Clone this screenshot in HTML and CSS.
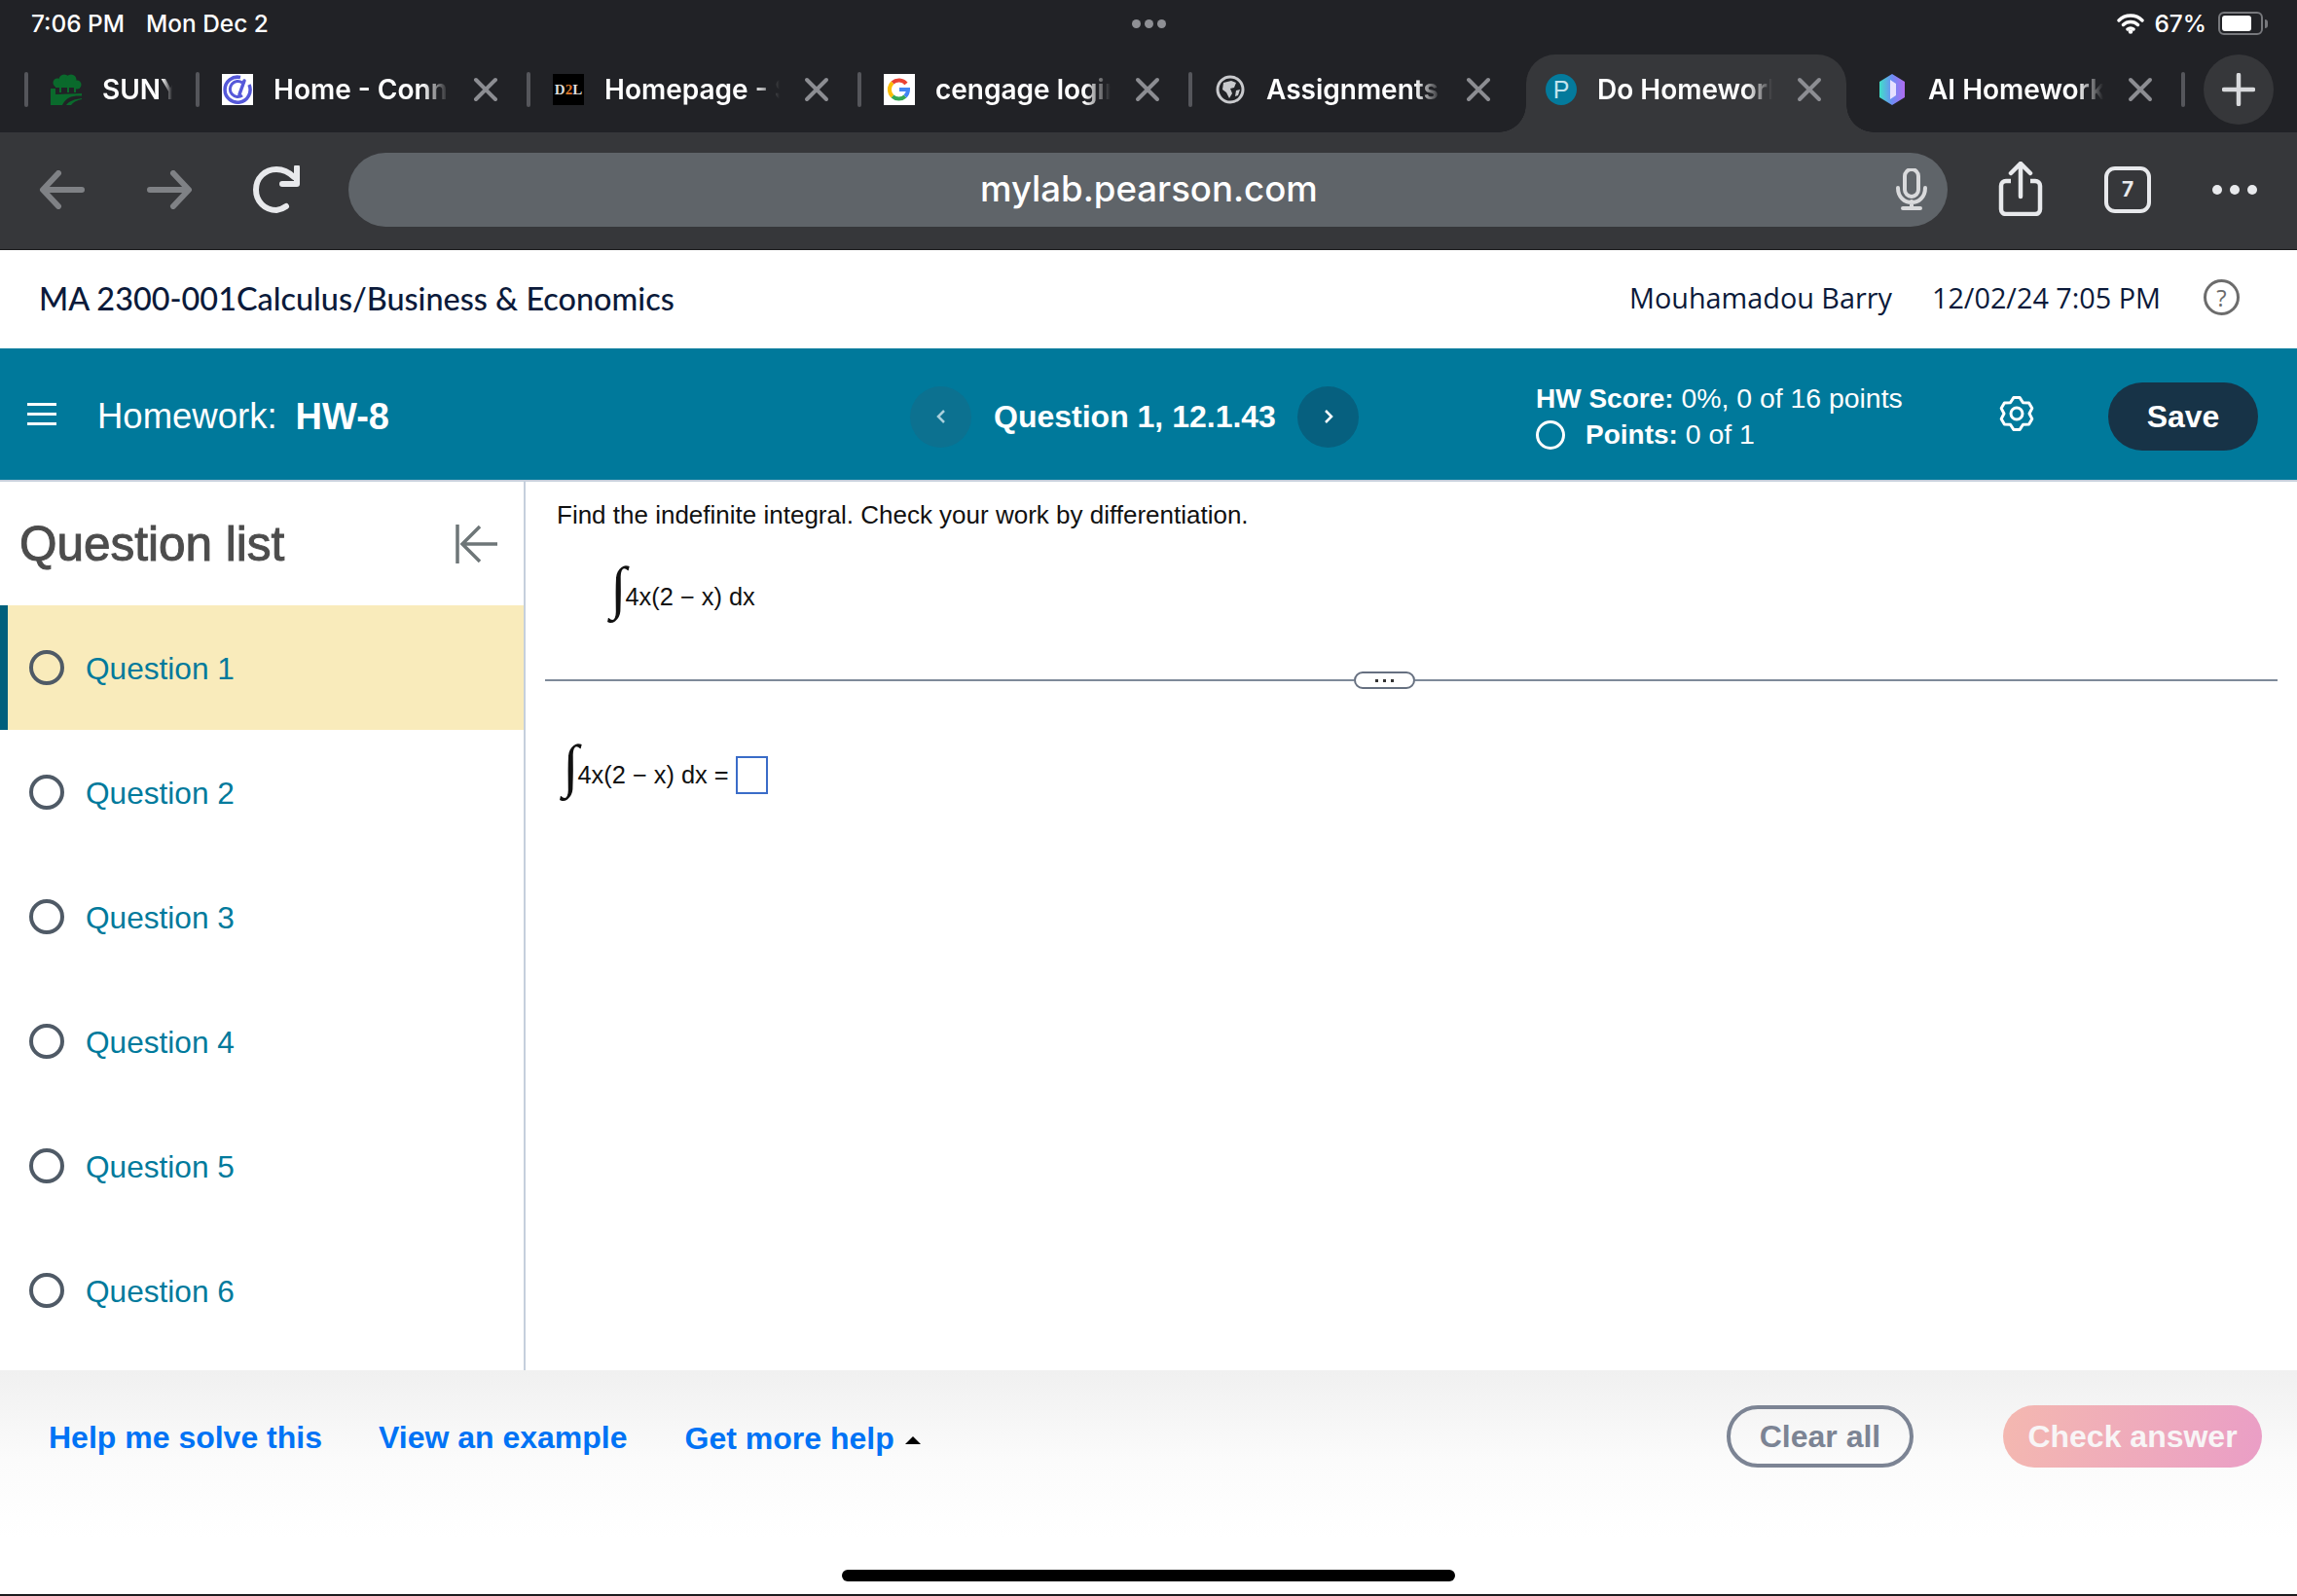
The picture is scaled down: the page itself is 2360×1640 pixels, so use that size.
FILE: index.html

```html
<!DOCTYPE html>
<html>
<head>
  <title>Do Homework</title>
  <meta charset="utf-8">
  <link rel="stylesheet" href="styles.css">
</head>
<body>

<div class="status">
  <div class="status-left"><span>7:06 PM</span><span>Mon Dec 2</span></div>
  <div class="status-dots"><i></i><i></i><i></i></div>
  <div class="status-right">
    <svg class="wifi" width="28" height="22" viewBox="0 0 28 22"><path d="M2 8a17 17 0 0 1 24 0M6.500 12.500a11 11 0 0 1 15 0M11 17a4.500 4.500 0 0 1 6 0" fill="none" stroke="#fff" stroke-width="3.400" stroke-linecap="round"/><circle cx="14" cy="19.500" r="2.300" fill="#fff"/></svg>
    <span>67%</span>
    <div class="battery"><div class="battery-fill"></div></div>
    <div class="battery-tip"></div>
  </div>
</div>

<div class="tabs">
  <div class="tab tab-short">
    <i class="sep"></i>
    <svg class="fav" viewBox="0 0 32 32"><circle cx="7" cy="9" r="4.500" fill="#0a6a2c"/><circle cx="14" cy="6" r="5.500" fill="#0a6a2c"/><circle cx="21" cy="6" r="5.500" fill="#0a6a2c"/><circle cx="27" cy="11" r="4.500" fill="#0a6a2c"/><rect x="5" y="8" width="24" height="6" fill="#0a6a2c"/><path d="M9 12h2v7H9zM17 10h2v9h-2zM24 12h2v7h-2z" fill="#0a6a2c"/><path d="M0 15h5v6l27-1v2.500C22 22 16 24 12 32H0z" fill="#0a6a2c"/><path d="M16 32c3-4 8-6 16-7v1c-5 1-9 3-11 6z" fill="#0a6a2c"/></svg>
    <span class="tab-title">SUNY</span>
  </div>
  <div class="tab">
    <i class="sep"></i>
    <svg class="fav" viewBox="0 0 32 32"><rect width="32" height="32" fill="#fff"/><path d="M19 3.500A13 13 0 1 0 28 11" fill="none" stroke="#5558d9" stroke-width="3.500"/><path d="M21 9a8 8 0 1 0 0 13" fill="none" stroke="#5558d9" stroke-width="3"/><path d="M23 7l-5 14" fill="none" stroke="#5558d9" stroke-width="3.500" stroke-linecap="round"/></svg>
    <span class="tab-title">Home - Connect</span>
    <svg class="x" viewBox="0 0 26 26"><path d="M3 3l20 20M23 3L3 23"/></svg>
  </div>
  <div class="tab">
    <i class="sep"></i>
    <div class="fav fav-d2l">D<b>2</b>L</div>
    <span class="tab-title">Homepage - SUNY</span>
    <svg class="x" viewBox="0 0 26 26"><path d="M3 3l20 20M23 3L3 23"/></svg>
  </div>
  <div class="tab">
    <i class="sep"></i>
    <svg class="fav" viewBox="0 0 32 32"><rect width="32" height="32" fill="#fff"/><path d="M23 10a9.500 9.500 0 0 0-14-1" fill="none" stroke="#ea4335" stroke-width="4"/><path d="M9 9a9.500 9.500 0 0 0 0 14" fill="none" stroke="#fbbc05" stroke-width="4"/><path d="M9 23a9.500 9.500 0 0 0 13 0" fill="none" stroke="#34a853" stroke-width="4"/><path d="M22 23c2-2 3-4 3-7H16" fill="none" stroke="#4285f4" stroke-width="4"/></svg>
    <span class="tab-title">cengage login</span>
    <svg class="x" viewBox="0 0 26 26"><path d="M3 3l20 20M23 3L3 23"/></svg>
  </div>
  <div class="tab">
    <i class="sep"></i>
    <svg class="fav" viewBox="0 0 32 32"><circle cx="16" cy="16" r="13" fill="none" stroke="#c9cacd" stroke-width="3"/><path d="M9 9l8-2 5 2-2 5-4 1 2 5-3 5-3-6-4-3zM22 17l4-1-2 6-3 1z" fill="#c9cacd"/></svg>
    <span class="tab-title">Assignments</span>
    <svg class="x" viewBox="0 0 26 26"><path d="M3 3l20 20M23 3L3 23"/></svg>
  </div>
  <div class="tab tab-active">
    <div class="fav fav-p">P</div>
    <span class="tab-title">Do Homework</span>
    <svg class="x" viewBox="0 0 26 26"><path d="M3 3l20 20M23 3L3 23"/></svg>
  </div>
  <div class="tab tab-last">
    <svg class="fav fav-ai" viewBox="0 0 28 32"><defs><linearGradient id="hex" x1="0" x2="1" y1="0" y2="0"><stop offset="0" stop-color="#3fe0c8"/><stop offset="0.5" stop-color="#6d8cf5"/><stop offset="1" stop-color="#b06cf0"/></linearGradient></defs><path d="M14 0l13 8v16l-13 8-13-8V8z" fill="url(#hex)"/><path d="M12 6l6 4v12l-6 4z" fill="#e6e0ff"/></svg>
    <span class="tab-title">AI Homework</span>
    <svg class="x" viewBox="0 0 26 26"><path d="M3 3l20 20M23 3L3 23"/></svg>
    <i class="sep sep-end"></i>
  </div>
  <div class="new-tab">
    <svg width="34" height="34" viewBox="0 0 34 34"><path d="M17 2v30M2 17h30" stroke="#d8d9dc" stroke-width="4.500" stroke-linecap="round"/></svg>
  </div>
</div>

<div class="toolbar">
  <svg class="tool-arrow" width="48" height="40" viewBox="0 0 48 40"><path d="M44 20H5M20 3L4 20l16 17" fill="none" stroke="#7f8185" stroke-width="6" stroke-linecap="round" stroke-linejoin="round"/></svg>
  <svg class="tool-arrow tool-forward" width="48" height="40" viewBox="0 0 48 40"><path d="M4 20h39M28 3l16 17-16 17" fill="none" stroke="#7f8185" stroke-width="6" stroke-linecap="round" stroke-linejoin="round"/></svg>
  <svg class="tool-reload" width="50" height="50" viewBox="0 0 50 50"><path d="M35 42a22 22 0 0 1-10 4C13 46 4 37 4 25S13 4 25 4c7 0 13 3 18 8" fill="none" stroke="#e8e9ec" stroke-width="6" stroke-linecap="round"/><path d="M46 2v17H31" fill="none" stroke="#e8e9ec" stroke-width="6" stroke-linejoin="round" stroke-linecap="round"/></svg>
  <div class="url">
    <span class="url-text">mylab.pearson.com</span>
    <svg class="mic" width="32" height="44" viewBox="0 0 32 44"><rect x="9" y="1" width="14" height="28" rx="7" fill="none" stroke="#d9dadc" stroke-width="4"/><path d="M2 20c0 20 28 20 28 0M16 34v6M7 41h18" fill="none" stroke="#d9dadc" stroke-width="4" stroke-linecap="round"/></svg>
  </div>
  <svg class="tool-share" width="46" height="56" viewBox="0 0 46 56"><path d="M13 20H8a5 5 0 0 0-5 5v24a5 5 0 0 0 5 5h30a5 5 0 0 0 5-5V25a5 5 0 0 0-5-5h-5" fill="none" stroke="#e8e9ec" stroke-width="4.500"/><path d="M23 36V3M13 12l10-10 10 10" fill="none" stroke="#e8e9ec" stroke-width="4.500" stroke-linecap="round"/></svg>
  <div class="tab-count">7</div>
  <div class="tool-more"><i></i><i></i><i></i></div>
</div>

<div class="course">
  <div class="course-name">MA 2300-001Calculus/Business &amp; Economics</div>
  <div class="course-user">Mouhamadou Barry</div>
  <div class="course-date">12/02/24 7:05 PM</div>
  <div class="help">?</div>
</div>

<div class="hw-bar">
  <div class="hw-title">
    <div class="burger"><i></i><i></i><i></i></div>
    <span class="hw-label">Homework:</span>
    <b class="hw-name">HW-8</b>
  </div>
  <div class="q-nav">
    <div class="q-btn q-prev">
      <svg width="12" height="18" viewBox="0 0 12 18"><path d="M9 3L3 9l6 6" fill="none" stroke="#a9d0dc" stroke-width="2.500"/></svg>
    </div>
    <span class="q-name">Question 1, 12.1.43</span>
    <div class="q-btn q-next">
      <svg width="12" height="18" viewBox="0 0 12 18"><path d="M3 3l6 6-6 6" fill="none" stroke="#fff" stroke-width="2.500"/></svg>
    </div>
  </div>
  <div class="hw-score">
    <div><b>HW Score:</b> 0%, 0 of 16 points</div>
    <div class="hw-points"><i class="points-ring"></i><span><b>Points:</b> 0 of 1</span></div>
  </div>
  <svg class="gear" width="36" height="36" viewBox="0 0 36 36"><path d="M14.800 1.600H21.200L24.500 6.700L30.600 7L33.800 12.600L31 18L33.800 23.400L30.600 29L24.500 29.300L21.200 34.400H14.800L11.500 29.300L5.400 29L2.200 23.400L5 18L2.200 12.600L5.400 7L11.500 6.700Z" fill="none" stroke="#fff" stroke-width="3" stroke-linejoin="round"/><circle cx="18" cy="18" r="6" fill="none" stroke="#fff" stroke-width="3"/></svg>
  <div class="save">Save</div>
</div>

<div class="main">
  <div class="side">
    <div class="side-head">
      <span class="side-title">Question list</span>
      <svg width="46" height="42" viewBox="0 0 46 42"><path d="M3 1v40M44 21H10M26 3L8 21l18 18" fill="none" stroke="#6e7678" stroke-width="3.500"/></svg>
    </div>
    <div class="q-item q-item-on"><i class="ring"></i><span class="q-label">Question 1</span></div>
    <div class="q-item"><i class="ring"></i><span class="q-label">Question 2</span></div>
    <div class="q-item"><i class="ring"></i><span class="q-label">Question 3</span></div>
    <div class="q-item"><i class="ring"></i><span class="q-label">Question 4</span></div>
    <div class="q-item"><i class="ring"></i><span class="q-label">Question 5</span></div>
    <div class="q-item"><i class="ring"></i><span class="q-label">Question 6</span></div>
  </div>
  <div class="work">
    <p class="prompt">Find the indefinite integral. Check your work by differentiation.</p>
    <div class="math math-top"><span class="int">∫</span>4x(2 − x) dx</div>
    <div class="split">
      <div class="split-line split-left"></div>
      <div class="split-handle"><i></i><i></i><i></i></div>
      <div class="split-line"></div>
    </div>
    <div class="math math-answer"><span class="int">∫</span>4x(2 − x) dx =<div class="answer-box"></div></div>
  </div>
</div>

<div class="foot">
  <div class="foot-row">
    <span class="foot-link">Help me solve this</span>
    <span class="foot-link foot-view">View an example</span>
    <span class="foot-link foot-more">Get more help</span>
    <i class="caret"></i>
    <div class="btn-clear">Clear all</div>
    <div class="btn-check">Check answer</div>
  </div>
  <div class="home-bar"></div>
</div>

</body>
</html>
```

FILE: styles.css

```css
html, body {
    margin: 0;
    padding: 0;
}

body {
    width: 2360px;
    height: 1640px;
    overflow: hidden;
    background: #fff;
    font-family: "Liberation Sans", Arial, sans-serif;
    display: flex;
    flex-direction: column;
}

/* ipad status bar */
.status {
    height: 56px;
    background: #212226;
    color: #fff;
    font-family: Inter, sans-serif;
    font-size: 24.400px;
    font-weight: 500;
    display: flex;
    align-items: center;
    padding: 0 30px 8px 32px;
    box-sizing: border-box;
}

.status-left {
    width: 1131px;
    display: flex;
    gap: 22px;
}

.status-dots {
    display: flex;
    gap: 4px;
}

.status-dots i {
    width: 9px;
    height: 9px;
    border-radius: 50%;
    background: #8f9095;
}

.status-right {
    margin-left: auto;
    display: flex;
    align-items: center;
}

.wifi {
    margin-right: 10px;
}

.battery {
    width: 46px;
    height: 24px;
    border: 2px solid #77787c;
    border-radius: 6px;
    margin-left: 12px;
    padding: 2px;
    display: flex;
    box-sizing: border-box;
}

.battery-fill {
    width: 30px;
    background: #fff;
    border-radius: 3px;
}

.battery-tip {
    width: 3px;
    height: 9px;
    margin-left: 2px;
    background: #77787c;
    border-radius: 0 3px 3px 0;
}

/* safari tabs */
.tabs {
    height: 80px;
    background: #212226;
    display: flex;
    padding-left: 25px;
    color: #fff;
    font-family: Inter, sans-serif;
    font-size: 28px;
    font-weight: 600;
}

.tab {
    width: 340px;
    height: 72px;
    display: flex;
    align-items: center;
    flex: none;
}

.tab-short {
    width: 176px;
}

.sep {
    width: 4px;
    height: 36px;
    background: #55565b;
    border-radius: 2px;
    margin-right: 23px;
    flex: none;
}

.sep-end {
    margin: 0 0 0 29px;
}

.fav {
    width: 32px;
    height: 32px;
    margin-right: 21px;
    flex: none;
}

.fav-d2l {
    background: #000;
    color: #ddd;
    font-family: "Liberation Serif", serif;
    font-size: 15px;
    font-weight: 700;
    line-height: 32px;
    text-align: center;
    white-space: nowrap;
}

.fav-d2l b {
    color: #e07a2a;
}

.fav-p {
    background: #047a9c;
    border-radius: 50%;
    color: #c4e4ee;
    font-family: "Liberation Sans", sans-serif;
    font-size: 25px;
    font-weight: 400;
    line-height: 32px;
    text-align: center;
}

.fav-ai {
    width: 28px;
    margin-right: 23px;
}

.tab-title {
    width: 180px;
    flex: none;
    overflow: hidden;
    white-space: nowrap;
    -webkit-mask-image: linear-gradient(to right, #000 85%, transparent 100%);
    mask-image: linear-gradient(to right, #000 85%, transparent 100%);
}

.tab-short .tab-title {
    width: 72px;
}

.x {
    width: 26px;
    height: 26px;
    margin-left: 25px;
    flex: none;
}

.x path {
    stroke: #8c8d92;
    stroke-width: 4;
    stroke-linecap: round;
    fill: none;
}

.tab-active {
    position: relative;
    width: 329px;
    height: 80px;
    margin-left: 7px;
    padding: 0 0 8px 20px;
    box-sizing: border-box;
    background: #36373a;
    border-radius: 30px 30px 0 0;
}

.tab-active::before,
.tab-active::after {
    content: "";
    position: absolute;
    bottom: 0;
    width: 28px;
    height: 28px;
}

.tab-active::before {
    left: -28px;
    background: radial-gradient(circle at 0 0, transparent 27.500px, #36373a 28px);
}

.tab-active::after {
    right: -28px;
    background: radial-gradient(circle at 100% 0, transparent 27.500px, #36373a 28px);
}

.tab-last {
    width: 367px;
    padding-left: 33px;
    box-sizing: border-box;
}

.new-tab {
    width: 72px;
    height: 72px;
    border-radius: 50%;
    background: #36373a;
    display: flex;
    align-items: center;
    justify-content: center;
}

/* address bar row */
.toolbar {
    height: 121px;
    background: #36373a;
    border-bottom: 1px solid #1c1c1e;
    box-sizing: border-box;
    display: flex;
    align-items: center;
    padding: 0 0 3px 40px;
}

.tool-forward {
    margin-left: 62px;
}

.tool-reload {
    margin-left: 61px;
}

.url {
    width: 1643px;
    height: 76px;
    margin-left: 49px;
    border-radius: 38px;
    background: #5f6469;
    display: flex;
    align-items: center;
    padding-left: 649px;
    box-sizing: border-box;
}

.url-text {
    color: #fff;
    font-family: Inter, sans-serif;
    font-size: 36.600px;
    font-weight: 500;
    margin-bottom: 2px;
}

.mic {
    margin-left: auto;
    margin-right: 21px;
}

.tool-share {
    margin-left: 52px;
    margin-top: -2px;
}

.tab-count {
    width: 48px;
    height: 48px;
    margin-left: 63px;
    border: 4px solid #e8e9ec;
    border-radius: 11px;
    box-sizing: border-box;
    color: #e8e9ec;
    font-family: Inter, sans-serif;
    font-size: 21px;
    font-weight: 700;
    line-height: 40px;
    text-align: center;
}

.tool-more {
    display: flex;
    gap: 8px;
    margin-left: 63px;
}

.tool-more i {
    width: 10px;
    height: 10px;
    border-radius: 50%;
    background: #e8e9ec;
}

/* course header */
.course {
    height: 101px;
    display: flex;
    align-items: center;
    padding: 0 59px 4px 40px;
    box-sizing: border-box;
    font-family: "Open Sans", sans-serif;
    font-size: 28.800px;
    color: #0b1a3a;
}

.course-name {
    font-family: Lato, sans-serif;
    font-size: 32.400px;
    font-weight: 500;
    margin-top: 2px;
}

.course-user {
    margin-left: auto;
}

.course-date {
    margin-left: 41px;
}

.help {
    width: 37px;
    height: 37px;
    margin-left: 44px;
    border: 3px solid #6c6c6c;
    border-radius: 50%;
    box-sizing: border-box;
    font-size: 24px;
    line-height: 31px;
    text-align: center;
    color: #6c6c6c;
}

/* homework bar */
.hw-bar {
    height: 137px;
    background: #00799b;
    border-bottom: 2px solid #c5cfdc;
    box-sizing: border-box;
    color: #fff;
    display: flex;
    align-items: center;
    padding: 5px 0 0 28px;
}

.hw-title {
    width: 907px;
    flex: none;
    display: flex;
    align-items: center;
    font-size: 36.500px;
}

.burger {
    width: 30px;
    margin: -6px 42px 0 0;
}

.burger i {
    display: block;
    height: 3px;
    background: #fff;
    margin: 7px 0;
}

.hw-name {
    margin-left: 19px;
    font-size: 38px;
}

.q-nav {
    width: 462px;
    flex: none;
    display: flex;
    align-items: center;
}

.q-btn {
    width: 63px;
    height: 63px;
    border-radius: 50%;
    display: flex;
    align-items: center;
    justify-content: center;
    flex: none;
}

.q-prev {
    background: #0c7190;
}

.q-next {
    background: #06607f;
}

.q-name {
    width: 335px;
    flex: none;
    padding-left: 23px;
    box-sizing: border-box;
    font-size: 32px;
    font-weight: 700;
    white-space: nowrap;
}

.hw-score {
    width: 476px;
    margin-left: 181px;
    flex: none;
    font-size: 28.400px;
    line-height: 36px;
}

.hw-score b {
    font-size: 28px;
}

.hw-points {
    display: flex;
    align-items: center;
    gap: 21px;
}

.points-ring {
    width: 24px;
    height: 24px;
    border: 3px solid #fff;
    border-radius: 50%;
}

.gear {
    margin-top: -6px;
    flex: none;
}

.save {
    width: 154px;
    height: 70px;
    margin-left: 76px;
    border-radius: 35px;
    background: #173347;
    font-size: 32px;
    font-weight: 700;
    line-height: 70px;
    text-align: center;
}

/* question list + work area */
.main {
    height: 913px;
    display: flex;
}

.side {
    width: 540px;
    flex: none;
    border-right: 2px solid #c5cfdc;
    box-sizing: border-box;
}

.side-head {
    height: 127px;
    display: flex;
    align-items: center;
    justify-content: space-between;
    padding: 0 25px 0 20px;
    box-sizing: border-box;
}

.side-title {
    font-size: 49.500px;
    -webkit-text-stroke: 1px #4c4c4c;
    color: #4c4c4c;
}

.q-item {
    height: 128px;
    display: flex;
    align-items: center;
    padding-left: 30px;
    box-sizing: border-box;
    font-size: 31.600px;
    color: #007a9c;
}

.q-item-on {
    background: #f9ebbb;
    border-left: 8px solid #00607c;
    padding-left: 22px;
}

.ring {
    width: 36px;
    height: 36px;
    border: 4px solid #4f5a66;
    border-radius: 50%;
    box-sizing: border-box;
    margin-right: 22px;
}

.q-label {
    margin-top: 3px;
}

.work {
    flex: 1;
    padding: 0 20px 0 20px;
    color: #111;
    font-size: 25.400px;
}

.prompt {
    margin: 19px 0 0 12px;
    font-size: 26px;
    line-height: 30px;
}

.math {
    display: flex;
    align-items: center;
    line-height: 30px;
}

.math-top {
    margin: 30px 0 0 67px;
    height: 78px;
}

.math-answer {
    margin: 48px 0 0 18px;
    height: 78px;
}

.int {
    font-family: "Liberation Serif", serif;
    font-size: 60px;
    line-height: 60px;
    margin: -18px -1px 0 0;
}

.split {
    display: flex;
    align-items: center;
    margin-top: 37px;
    height: 20px;
}

.split-line {
    flex: 1;
    height: 2px;
    background: #7e8a99;
}

.split-left {
    flex: 0 0 831px;
}

.split-handle {
    width: 63px;
    height: 18px;
    border: 2px solid #667080;
    border-radius: 9px;
    box-sizing: border-box;
    display: flex;
    align-items: center;
    justify-content: center;
    gap: 5px;
}

.split-handle i {
    width: 3px;
    height: 3px;
    background: #333;
}

.answer-box {
    width: 33px;
    height: 39px;
    margin-left: 7px;
    border: 2px solid #3a6cc8;
    box-sizing: border-box;
}

/* bottom bar */
.foot {
    height: 232px;
    background: linear-gradient(#f0f0f0, #fbfbfb 40%, #fff 75%);
    border-bottom: 2px solid #1c1c1e;
    box-sizing: border-box;
    display: flex;
    flex-direction: column;
}

.foot-row {
    height: 64px;
    margin-top: 36px;
    display: flex;
    align-items: center;
    padding: 0 36px 0 50px;
    font-size: 32px;
    font-weight: 700;
}

.foot-link {
    color: #0073f5;
    margin-right: 58px;
    margin-top: 2px;
}

.foot-view {
    margin-right: 59px;
}

.foot-more {
    margin-right: 11px;
    margin-top: 5px;
}

.caret {
    width: 0;
    height: 0;
    border-left: 8px solid transparent;
    border-right: 8px solid transparent;
    border-bottom: 8px solid #000;
    margin-top: 8px;
}

.btn-clear {
    width: 192px;
    height: 64px;
    margin-left: auto;
    border: 4px solid #7c8494;
    border-radius: 32px;
    box-sizing: border-box;
    color: #7c8494;
    font-size: 32px;
    line-height: 56px;
    text-align: center;
}

.btn-check {
    width: 266px;
    height: 64px;
    margin-left: 92px;
    border-radius: 32px;
    background: linear-gradient(100deg, #f4b8b0, #ea9ec6);
    color: #f8f5f6;
    font-size: 32px;
    line-height: 64px;
    text-align: center;
}

.home-bar {
    width: 630px;
    height: 12px;
    margin: auto auto 13px;
    background: #000;
    border-radius: 6px;
}
```
